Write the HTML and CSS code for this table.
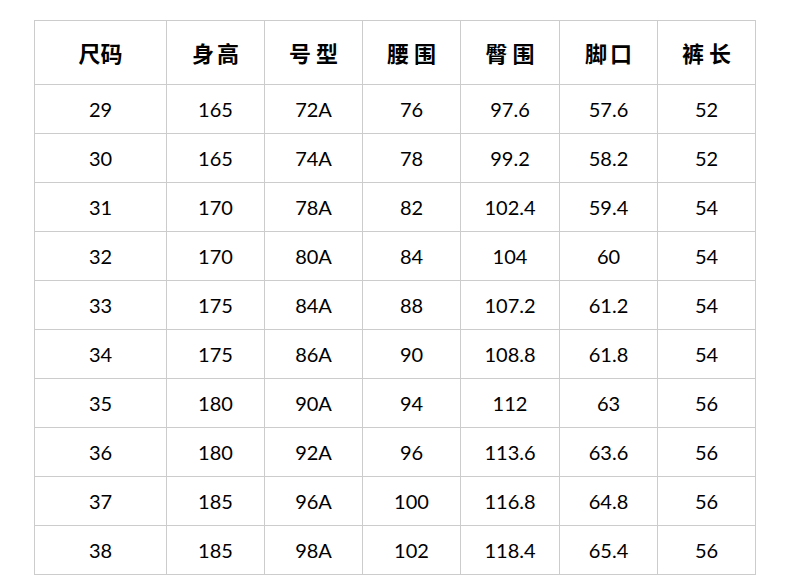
FILE: index.html
```html
<!DOCTYPE html>
<html lang="zh">
<head>
<meta charset="utf-8">
<link rel="stylesheet" href="styles.css">
</head>
<body>
<table class="size-table">
  <colgroup>
    <col class="c-wide"><col class="c"><col class="c"><col class="c"><col class="c-hip"><col class="c"><col class="c">
  </colgroup>
  <thead>
    <tr>
      <th class="tight">尺码</th><th class="sp3">身高</th><th>号型</th><th>腰围</th><th>臀围</th><th class="sp3">脚口</th><th>裤长</th>
    </tr>
  </thead>
  <tbody>
    <tr><td>29</td><td>165</td><td>72A</td><td>76</td><td>97.6</td><td>57.6</td><td>52</td></tr>
    <tr><td>30</td><td>165</td><td>74A</td><td>78</td><td>99.2</td><td>58.2</td><td>52</td></tr>
    <tr><td>31</td><td>170</td><td>78A</td><td>82</td><td>102.4</td><td>59.4</td><td>54</td></tr>
    <tr><td>32</td><td>170</td><td>80A</td><td>84</td><td>104</td><td>60</td><td>54</td></tr>
    <tr><td>33</td><td>175</td><td>84A</td><td>88</td><td>107.2</td><td>61.2</td><td>54</td></tr>
    <tr><td>34</td><td>175</td><td>86A</td><td>90</td><td>108.8</td><td>61.8</td><td>54</td></tr>
    <tr><td>35</td><td>180</td><td>90A</td><td>94</td><td>112</td><td>63</td><td>56</td></tr>
    <tr><td>36</td><td>180</td><td>92A</td><td>96</td><td>113.6</td><td>63.6</td><td>56</td></tr>
    <tr><td>37</td><td>185</td><td>96A</td><td>100</td><td>116.8</td><td>64.8</td><td>56</td></tr>
    <tr><td>38</td><td>185</td><td>98A</td><td>102</td><td>118.4</td><td>65.4</td><td>56</td></tr>
  </tbody>
</table>
</body>
</html>
```

FILE: styles.css
```css
html, body {
  margin: 0;
  padding: 0;
  background: #ffffff;
}

body {
  padding: 20px 0 0 34px;
}

.size-table {
  border-collapse: collapse;
  table-layout: fixed;
  width: 722px;
  color: #000;
}

.c-wide { width: 132px; }
.c { width: 98px; }
.c-hip { width: 99px; }

.size-table th,
.size-table td {
  border: 1px solid #cccccc;
  padding: 0;
  text-align: center;
  vertical-align: middle;
}

.size-table th {
  height: 61px;
  font-family: "Noto Sans CJK SC", sans-serif;
  font-weight: 700;
  font-size: 22px;
  letter-spacing: 5px;
  text-indent: 5px;
  line-height: 1;
  padding-bottom: 2px;
}

.size-table th.tight {
  letter-spacing: 0;
  text-indent: 0;
}

.size-table th.sp3 {
  letter-spacing: 3px;
  text-indent: 3px;
}

.size-table td {
  height: 47px;
  font-family: "Lato", "Noto Sans", sans-serif;
  font-weight: 400;
  font-size: 20px;
  line-height: 1;
  padding-bottom: 1px;
}
```
